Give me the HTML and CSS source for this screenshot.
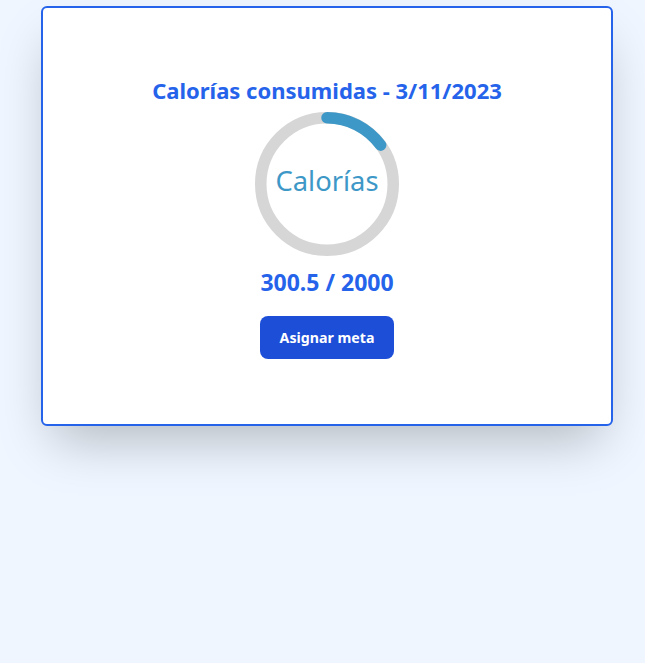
FILE: index.html
```html
<!DOCTYPE html>
<html lang="es">
<head>
<meta charset="utf-8">
<title>Calorías</title>
<link rel="stylesheet" href="styles.css">
</head>
<body>
<main class="page">
  <section class="card">
    <h1 class="title">Calorías consumidas - 3/11/2023</h1>
    <div class="progress">
      <svg class="ring" viewBox="0 0 100 100" width="144" height="144">
        <circle class="trail" cx="50" cy="50" r="46"></circle>
        <circle class="bar" cx="50" cy="50" r="46" pathLength="100" stroke-dasharray="15.025 100" transform="rotate(-90 50 50)"></circle>
        <text class="ring-text" x="50" y="50">Calorías</text>
      </svg>
    </div>
    <p class="amount">300.5 / 2000</p>
    <button class="btn" type="button">Asignar meta</button>
  </section>
</main>
</body>
</html>
```
FILE: styles.css
```css
html, body {
  margin: 0;
  padding: 0;
}
body {
  background: #eff6ff;
  font-family: "Noto Sans", "Open Sans", sans-serif;
  width: 645px;
  height: 663px;
}
.page {
  padding-top: 6px;
  padding-left: 41px;
}
.card {
  box-sizing: border-box;
  width: 572px;
  height: 420px;
  background: #fff;
  border: 2px solid #2563eb;
  border-radius: 6px;
  box-shadow: 0 25px 50px -12px rgba(0, 0, 0, 0.25);
  display: flex;
  flex-direction: column;
  align-items: center;
  padding-top: 66px;
}
.title {
  margin: 0;
  font-size: 22px;
  line-height: 32px;
  font-weight: 700;
  color: #2563eb;
}
.progress {
  margin-top: 6px;
  width: 144px;
  height: 144px;
}
.ring {
  display: block;
}
.trail {
  fill: none;
  stroke: #d6d6d6;
  stroke-width: 8;
}
.bar {
  fill: none;
  stroke: #3e98c7;
  stroke-width: 8;
  stroke-linecap: round;
}
.ring-text {
  fill: #3e98c7;
  font-size: 19px;
  text-anchor: middle;
  dominant-baseline: middle;
}
.amount {
  margin: 10px 0 0;
  font-size: 23px;
  line-height: 32px;
  font-weight: 700;
  color: #2563eb;
}
.btn {
  margin-top: 18px;
  height: 43px;
  padding: 0 20px;
  border: 0;
  border-radius: 8px;
  background: #1d4ed8;
  color: #fff;
  font-family: inherit;
  font-size: 14.2px;
  font-weight: 700;
  cursor: pointer;
}
```
